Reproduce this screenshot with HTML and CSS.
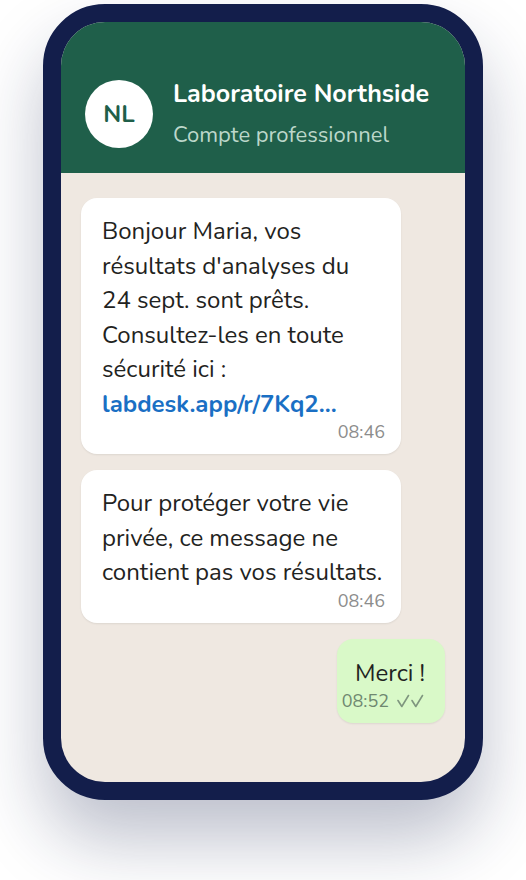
FILE: index.html
```html
<!DOCTYPE html>
<html lang="fr">
<head>
  <meta charset="UTF-8" />
  <meta name="viewport" content="width=device-width, initial-scale=1.0"/>
  <title>Laboratoire Northside</title>
  <link rel="stylesheet" href="styles.css">
</head>
<body>
  <div class="phone">
    <div class="screen">
      <header class="chat-header">
        <div class="avatar">NL</div>
        <div class="contact">
          <h1 class="contact-name">Laboratoire Northside</h1>
          <p class="contact-sub">Compte professionnel</p>
        </div>
      </header>

      <div class="chat-body">
        <div class="bubble in">
          <p class="bubble-text">Bonjour Maria, vos résultats d'analyses du 24&nbsp;sept. sont prêts. Consultez-les en toute sécurité ici&nbsp;: <a class="link" href="#">labdesk.app/r/7Kq2...</a></p>
          <div class="meta"><span>08:46</span></div>
        </div>
        <div class="bubble in">
          <p class="bubble-text">Pour protéger votre vie privée, ce message ne contient pas vos résultats.</p>
          <div class="meta"><span>08:46</span></div>
        </div>
        <div class="bubble out">
          <p class="bubble-text">Merci&nbsp;!</p>
          <div class="meta">
            <span>08:52</span>
            <svg class="ticks" width="28" height="14" viewBox="0 0 28 14" fill="none" stroke="currentColor" stroke-width="1.6" stroke-linecap="round" stroke-linejoin="round">
              <path d="M1 6.5 L4.8 12.5 L11.5 1.5"/>
              <path d="M15 6.5 L18.8 12.5 L25.5 1.5"/>
            </svg>
          </div>
        </div>
      </div>
    </div>
  </div>
</body>
</html>
```

FILE: styles.css
```css
:root {
  --frame-color: #131e4b;
  --header-color: #1f5f4a;
  --chat-bg: #efe8e1;
  --bubble-in: #ffffff;
  --bubble-out: #d9f9c8;
  --text-color: #1f2321;
  --meta-color: #8c8c8c;
  --link-color: #1a6fc4;
}

body {
  margin: 0;
  min-height: 880px;
  font-family: 'Nunito', 'Open Sans', sans-serif;
  background-color: #ffffff;
  color: var(--text-color);
}

.phone {
  width: 440px;
  height: 796px;
  box-sizing: border-box;
  margin: 4px auto 0;
  border: 18px solid var(--frame-color);
  border-radius: 62px;
  background-color: var(--frame-color);
  box-shadow: 0 40px 70px rgba(20, 31, 77, 0.28);
}

.screen {
  height: 100%;
  border-radius: 44px;
  overflow: hidden;
  display: flex;
  flex-direction: column;
  background-color: var(--chat-bg);
}

.chat-header {
  background-color: var(--header-color);
  color: white;
  display: flex;
  align-items: center;
  gap: 20px;
  padding: 56px 24px 24px;
}

.avatar {
  width: 68px;
  height: 68px;
  border-radius: 50%;
  background-color: white;
  color: var(--header-color);
  font-weight: bold;
  font-size: 24px;
  display: flex;
  align-items: center;
  justify-content: center;
  flex-shrink: 0;
}

.contact-name {
  margin: 0;
  font-size: 25px;
  font-weight: bold;
  line-height: 32px;
}

.contact-sub {
  margin: 11px 0 0;
  font-size: 22px;
  line-height: 28px;
  color: #bcd7ca;
}

.chat-body {
  flex: 1;
  display: flex;
  flex-direction: column;
  align-items: flex-start;
  gap: 16px;
  padding: 25px 20px;
}

.bubble {
  max-width: 320px;
  box-sizing: border-box;
  padding: 16px 15px 11px 21px;
  border-radius: 16px;
  box-shadow: 0 1px 2px rgba(0, 0, 0, 0.08);
}

.in {
  background-color: var(--bubble-in);
}

.in .meta {
  margin-right: 1px;
}

.out {
  background-color: var(--bubble-out);
  align-self: flex-end;
  padding: 17px 20px 11px 18px;
}

.bubble-text {
  margin: 0;
  font-size: 24px;
  line-height: 34.5px;
}

.link {
  color: var(--link-color);
  font-weight: bold;
  text-decoration: none;
}

.meta {
  contain: inline-size;
  display: flex;
  align-items: center;
  justify-content: flex-end;
  gap: 8px;
  font-size: 18px;
  line-height: 22px;
  color: var(--meta-color);
  white-space: nowrap;
}

.out .meta {
  color: #6f8870;
}

.ticks {
  color: #7f967f;
  flex-shrink: 0;
}
```
